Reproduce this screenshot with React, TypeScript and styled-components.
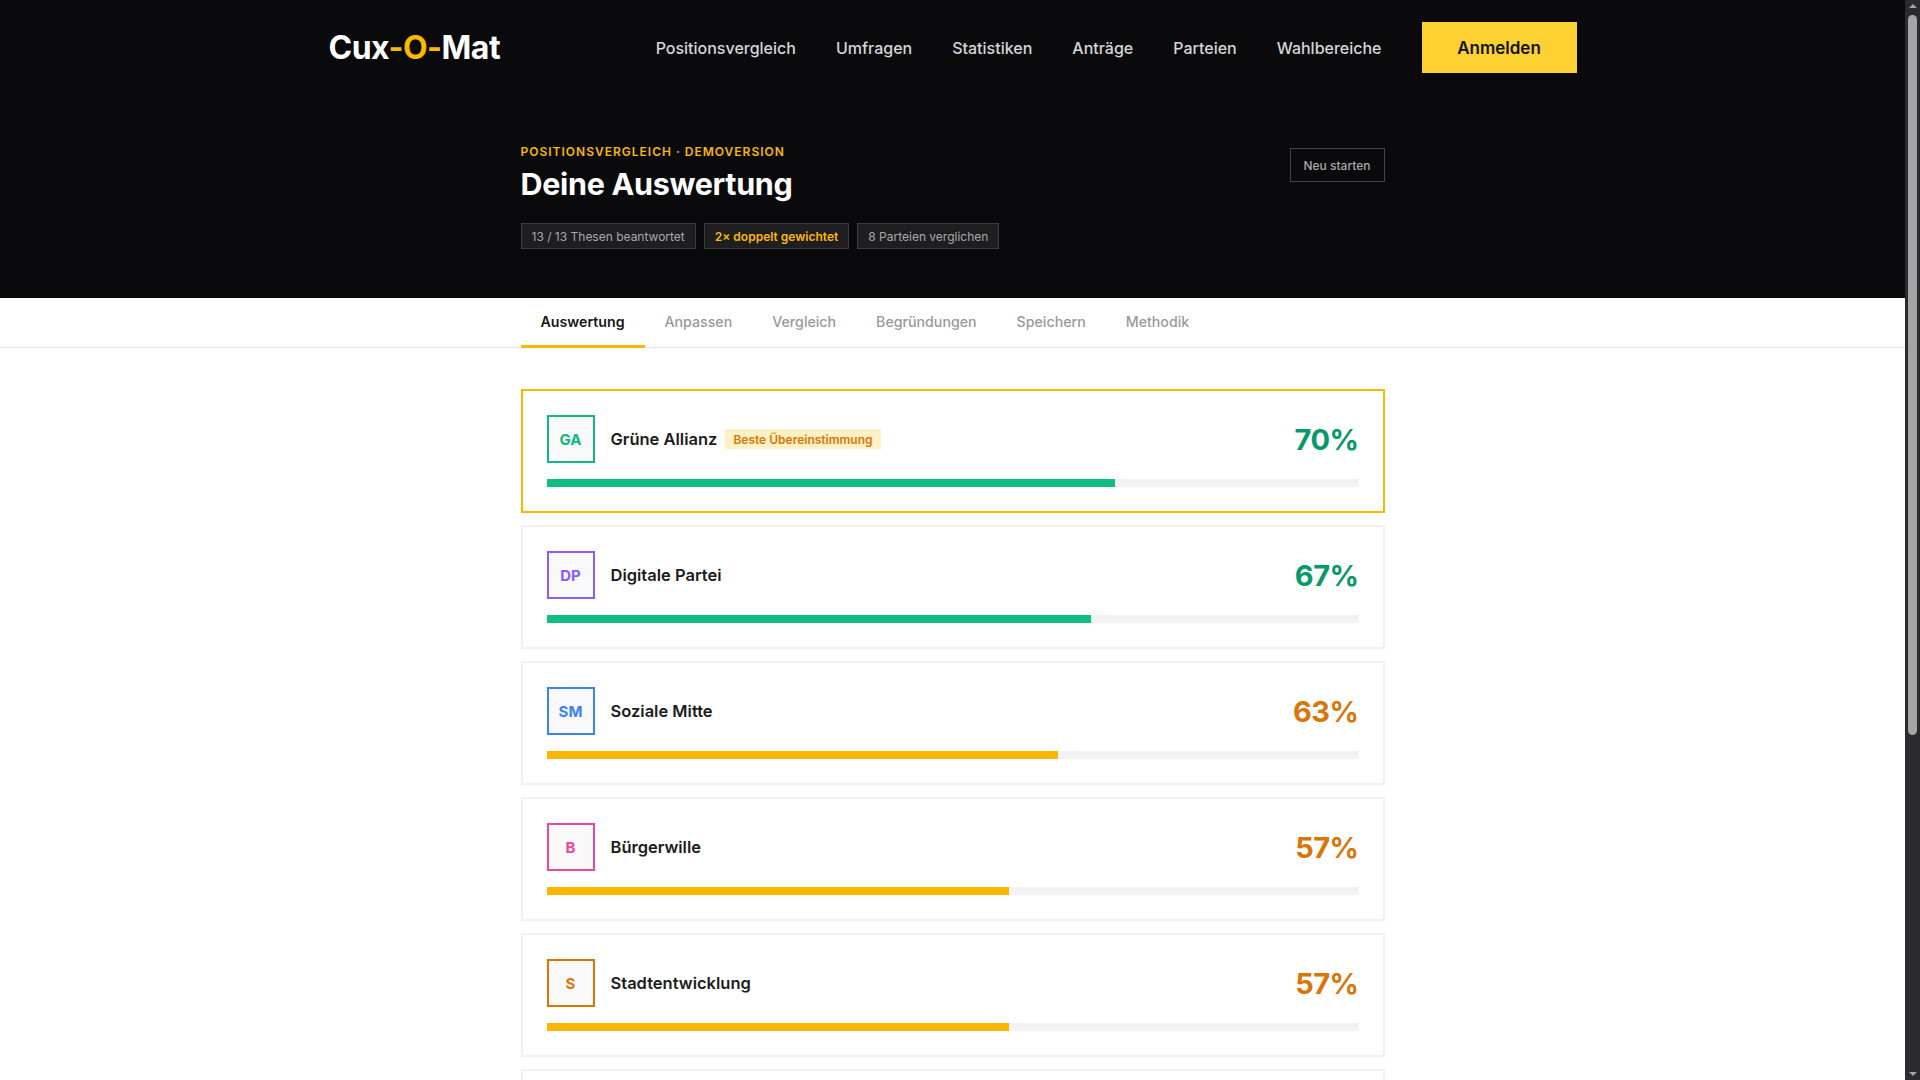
import styled, {createGlobalStyle} from "styled-components";
import React, {useEffect, useRef, useState} from "react";

const GlobalStyle = createGlobalStyle`
  * {
    box-sizing: border-box;
  }
  body {
    margin: 0;
    overflow: hidden;
    background: #ffffff;
    color: #1a1a1a;
    font-family: "Inter", "Noto Sans", sans-serif;
  }
`

const Shell = styled.div`
  height: 100vh;
  display: flex;
`
const Scroller = styled.div`
  flex: 1;
  min-width: 0;
  overflow-y: auto;
  scrollbar-width: none;
  background: #ffffff;

  &::-webkit-scrollbar {
    display: none;
  }
`
// dark scroll rail drawn next to the scrolling pane
const Rail = styled.div`
  width: 15px;
  flex: none;
  background: #2b2b2d;
  display: flex;
  flex-direction: column;
  align-items: center;
  padding: 4px 0;
`
const Arrow = styled.div<{ $down?: boolean }>`
  width: 0;
  height: 0;
  border-left: 4px solid transparent;
  border-right: 4px solid transparent;
  ${p => p.$down ? "border-top: 4px solid #a3a3a3;" : "border-bottom: 4px solid #a3a3a3;"}
`
const ThumbTrack = styled.div`
  flex: 1;
  width: 100%;
  padding: 7px 3px;
  display: flex;
  flex-direction: column;
`
const Thumb = styled.div`
  width: 9px;
  border-radius: 5px;
  background: #a5a5a5;
`
const Header = styled.header`
  background: #0a0a0c;
`
const TopBar = styled.div`
  max-width: 1248px;
  margin: 0 auto;
  height: 95px;
  display: flex;
  align-items: center;
  justify-content: space-between;
`
const Logo = styled.a`
  font-size: 32px;
  font-weight: 700;
  letter-spacing: -0.5px;
  color: #ffffff;
  text-decoration: none;
`
const LogoAccent = styled.span`
  color: #fbb800;
`
const Nav = styled.nav`
  display: flex;
  align-items: center;
  gap: 40px;
`
const NavLink = styled.a`
  font-size: 16px;
  font-weight: 500;
  color: #d6d6d6;
  text-decoration: none;
`
const LoginButton = styled.button`
  width: 155px;
  height: 51px;
  border: none;
  background: #fdd131;
  color: #111111;
  font-family: inherit;
  font-size: 17px;
  font-weight: 600;
  cursor: pointer;
`
const Hero = styled.div`
  max-width: 864px;
  margin: 0 auto;
  padding: 49px 0 49px;
  display: flex;
  justify-content: space-between;
  align-items: flex-start;
`
const Eyebrow = styled.div`
  font-size: 12px;
  font-weight: 600;
  letter-spacing: 1px;
  line-height: 16px;
  color: #fbb800;
`
const Title = styled.h1`
  margin: 4px 0 0;
  font-size: 30.5px;
  font-weight: 700;
  letter-spacing: -0.3px;
  line-height: 40px;
  color: #ffffff;
`
const Chips = styled.div`
  margin-top: 19px;
  display: flex;
  gap: 8px;
`
const Chip = styled.span<{ $accent?: boolean }>`
  height: 26px;
  padding: 0 10px;
  display: inline-flex;
  align-items: center;
  background: #1e1e21;
  border: 1px solid #3b3b3e;
  font-size: 12px;
  font-weight: ${p => p.$accent ? 600 : 400};
  color: ${p => p.$accent ? "#fbb800" : "#a8a8a8"};
`
const RestartButton = styled.button`
  margin-top: 4px;
  width: 95px;
  height: 34px;
  background: transparent;
  border: 1px solid #444446;
  color: #a8a8a8;
  font-family: inherit;
  font-size: 12px;
  font-weight: 500;
  cursor: pointer;
`
const TabBar = styled.div`
  border-bottom: 1px solid #e6e6e6;
`
const Tabs = styled.div`
  max-width: 864px;
  margin: 0 auto;
  display: flex;
`
const Tab = styled.button<{ $active?: boolean }>`
  height: 50px;
  padding: 0 20px;
  background: none;
  border: none;
  border-bottom: 3px solid ${p => p.$active ? "#fbb800" : "transparent"};
  margin-bottom: -1px;
  font-family: inherit;
  font-size: 14.2px;
  font-weight: ${p => p.$active ? 600 : 500};
  color: ${p => p.$active ? "#161616" : "#9a9a9a"};
  cursor: pointer;
`
const Results = styled.main`
  max-width: 864px;
  margin: 0 auto;
  padding: 41px 0 110px;
  display: flex;
  flex-direction: column;
  gap: 12px;
`
const Card = styled.article<{ $best?: boolean }>`
  border: 2px solid ${p => p.$best ? "#fbb800" : "#f1f1f1"};
  background: #ffffff;
  padding: 24px;
  display: flex;
  flex-direction: column;
  gap: 16px;
`
const CardHead = styled.div`
  display: flex;
  align-items: center;
  gap: 16px;
`
const Avatar = styled.div<{ $color: string }>`
  width: 48px;
  height: 48px;
  flex: none;
  display: flex;
  align-items: center;
  justify-content: center;
  border: 2px solid ${p => p.$color};
  background: #f9f9f9;
  color: ${p => p.$color};
  font-size: 15px;
  font-weight: 700;
`
const NameRow = styled.div`
  flex: 1;
  display: flex;
  align-items: center;
  gap: 8px;
`
const PartyName = styled.span`
  font-size: 16.5px;
  font-weight: 600;
  color: #1c1c1c;
`
const BestBadge = styled.span`
  height: 20px;
  padding: 0 8px;
  display: inline-flex;
  align-items: center;
  background: #fef1c5;
  color: #d97706;
  font-size: 12px;
  font-weight: 600;
`
const Score = styled.span<{ $high: boolean }>`
  font-size: 29px;
  font-weight: 700;
  letter-spacing: -0.5px;
  color: ${p => p.$high ? "#07996a" : "#d9760a"};
`
const Track = styled.div`
  height: 8px;
  background: #f3f3f3;
`
const Fill = styled.div<{ $high: boolean }>`
  height: 100%;
  background: ${p => p.$high ? "#0fbe80" : "#fbb700"};
`

type Party = {
    short: string
    name: string
    score: number
    color: string
}

const parties: Party[] = [
    {short: "GA", name: "Grüne Allianz", score: 70, color: "#10b981"},
    {short: "DP", name: "Digitale Partei", score: 67, color: "#8b5cf6"},
    {short: "SM", name: "Soziale Mitte", score: 63, color: "#3b82f6"},
    {short: "B", name: "Bürgerwille", score: 57, color: "#ec4899"},
    {short: "S", name: "Stadtentwicklung", score: 57, color: "#d97706"},
    {short: "LU", name: "Liberale Union", score: 51, color: "#0ea5e9"},
    {short: "KH", name: "Küste & Heimat", score: 44, color: "#64748b"},
    {short: "LL", name: "Linke Liste", score: 38, color: "#ef4444"},
]

const tabs = ["Auswertung", "Anpassen", "Vergleich", "Begründungen", "Speichern", "Methodik"]
const links = ["Positionsvergleich", "Umfragen", "Statistiken", "Anträge", "Parteien", "Wahlbereiche"]

export default function App() {
    const [tab, setTab] = useState("Auswertung")
    const [thumb, setThumb] = useState({top: 0, size: 1})
    const scroller = useRef<HTMLDivElement>(null)

    const measure = () => {
        const el = scroller.current
        if (!el) return
        setThumb({top: el.scrollTop / el.scrollHeight, size: el.clientHeight / el.scrollHeight})
    }
    useEffect(() => {
        measure()
        window.addEventListener("resize", measure)
        return () => window.removeEventListener("resize", measure)
    }, [])

    const best = Math.max(...parties.map(p => p.score))
    return <Shell>
        <GlobalStyle/>
        <Scroller ref={scroller} onScroll={measure}>
            <Header>
                <TopBar>
                    <Logo href="#">Cux<LogoAccent>-O-</LogoAccent>Mat</Logo>
                    <Nav>
                        {links.map(l => <NavLink key={l} href="#">{l}</NavLink>)}
                        <LoginButton>Anmelden</LoginButton>
                    </Nav>
                </TopBar>
                <Hero>
                    <div>
                        <Eyebrow>POSITIONSVERGLEICH · DEMOVERSION</Eyebrow>
                        <Title>Deine Auswertung</Title>
                        <Chips>
                            <Chip>13 / 13 Thesen beantwortet</Chip>
                            <Chip $accent>2× doppelt gewichtet</Chip>
                            <Chip>{parties.length} Parteien verglichen</Chip>
                        </Chips>
                    </div>
                    <RestartButton>Neu starten</RestartButton>
                </Hero>
            </Header>
            <TabBar>
                <Tabs>
                    {tabs.map(t =>
                        <Tab key={t} $active={t === tab} onClick={() => setTab(t)}>{t}</Tab>
                    )}
                </Tabs>
            </TabBar>
            <Results>
                {parties.map((p, i) => {
                    const high = p.score >= 65
                    const isBest = i === 0 && p.score === best
                    return <Card key={p.short} $best={isBest}>
                        <CardHead>
                            <Avatar $color={p.color}>{p.short}</Avatar>
                            <NameRow>
                                <PartyName>{p.name}</PartyName>
                                {isBest ? <BestBadge>Beste Übereinstimmung</BestBadge> : null}
                            </NameRow>
                            <Score $high={high}>{p.score}%</Score>
                        </CardHead>
                        <Track>
                            <Fill $high={high} style={{width: `${p.score}%`}}/>
                        </Track>
                    </Card>
                })}
            </Results>
        </Scroller>
        <Rail>
            <Arrow/>
            <ThumbTrack>
                <Thumb style={{marginTop: `${thumb.top * 100}%`, height: `${thumb.size * 100}%`}}/>
            </ThumbTrack>
            <Arrow $down/>
        </Rail>
    </Shell>
}
